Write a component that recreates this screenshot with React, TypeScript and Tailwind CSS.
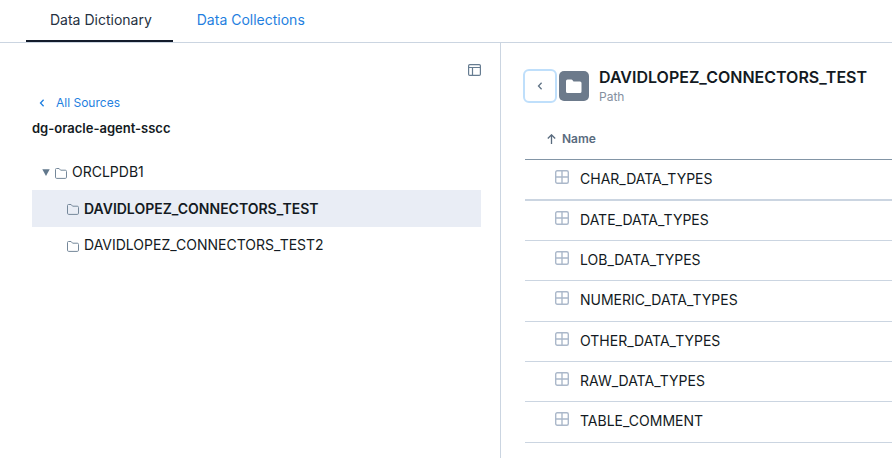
const tables = [
  "CHAR_DATA_TYPES",
  "DATE_DATA_TYPES",
  "LOB_DATA_TYPES",
  "NUMERIC_DATA_TYPES",
  "OTHER_DATA_TYPES",
  "RAW_DATA_TYPES",
  "TABLE_COMMENT",
];

function Chevron({ className }: { className: string }) {
  return (
    <svg className={className} width="6" height="8" viewBox="0 0 6 8" fill="none" stroke="currentColor" strokeWidth="1.3" aria-hidden="true">
      <path d="M4.6 0.8 1.5 4l3.1 3.2" />
    </svg>
  );
}

function FolderOutline() {
  return (
    <svg className="mt-[2px] shrink-0 text-[#75889a]" width="12" height="11" viewBox="0 0 12 11" fill="none" stroke="currentColor" aria-hidden="true">
      <path d="M.5 9.2V1.5q0-1 1-1h2.6l1.5 1.7h4.7q1.2 0 1.2 1.2v5.8q0 1.2-1.2 1.2H1.7Q.5 10.4 .5 9.2Z" />
    </svg>
  );
}

function TableIcon() {
  return (
    <svg className="block text-[#abb8ca]" width="14" height="14" viewBox="0 0 14 14" fill="none" stroke="currentColor" strokeWidth="1.4" aria-hidden="true">
      <rect x=".7" y=".7" width="12.6" height="12.6" rx="1.5" />
      <path d="M7 .7v12.6M.7 7h12.6" />
    </svg>
  );
}

export default function App() {
  return (
    <div className="flex min-h-screen flex-col bg-white font-['Inter','Liberation_Sans',sans-serif] text-sm text-[#131a22]">
      <nav className="flex h-[43px] border-b border-[#cbd5e1] pl-[26px]">
        <button className="h-[42px] border-b-2 border-[#131c2b] pr-[21px] pl-6 text-[#253041]">Data Dictionary</button>
        <button className="h-[42px] border-b-2 border-transparent px-6 text-[#1f7fe0]">Data Collections</button>
      </nav>
      <main className="flex flex-1">
        <aside className="w-[501px] shrink-0 border-r border-[#cbd5e1] pr-[19px] pl-8">
          <div className="flex justify-end pt-[21px]">
            <button aria-label="Toggle panel" className="text-[#667c91]">
              <svg width="13" height="12" viewBox="0 0 13 12" fill="none" stroke="currentColor" strokeWidth="1.2" aria-hidden="true">
                <rect x=".6" y=".6" width="11.8" height="10.8" rx="1.2" />
                <path d="M.6 3.5h11.8M4.5 3.5v7.9" />
              </svg>
            </button>
          </div>
          <a href="#sources" className="mt-[17px] ml-[7px] flex h-5 w-fit items-center text-xs text-[#1f7fe0]">
            <Chevron className="mr-[11px]" />
            All Sources
          </a>
          <h2 className="mt-[3px] text-[13px] leading-6 font-semibold">dg-oracle-agent-sscc</h2>
          <ul className="mt-[14px]">
            <li>
              <button className="flex h-9 w-full items-center pl-[10px] text-left">
                <svg className="mr-[5px] text-[#62788c]" width="8" height="7" viewBox="0 0 8 7" aria-hidden="true">
                  <path d="M.3.3h7.4L4 7Z" fill="currentColor" />
                </svg>
                <FolderOutline />
                <span className="ml-[5px]">ORCLPDB1</span>
              </button>
              <ul>
                <li>
                  <button className="flex h-[37px] w-full items-center bg-[#e9edf5] pl-[35px] text-left font-semibold">
                    <FolderOutline />
                    <span className="ml-[5px]">DAVIDLOPEZ_CONNECTORS_TEST</span>
                  </button>
                </li>
                <li>
                  <button className="flex h-9 w-full items-center pl-[35px] text-left">
                    <FolderOutline />
                    <span className="ml-[5px]">DAVIDLOPEZ_CONNECTORS_TEST2</span>
                  </button>
                </li>
              </ul>
            </li>
          </ul>
        </aside>
        <section className="min-w-0 flex-1 pl-[22px]">
          <header className="flex items-center pt-[22px]">
            <button aria-label="Back" className="flex size-[34px] shrink-0 items-center justify-center rounded-md border-2 border-[#bfdffb] text-[#607386]">
              <Chevron className="" />
            </button>
            <span className="ml-[2px] flex size-[30px] shrink-0 items-center justify-center rounded-[5px] bg-[#6c7a8b]">
              <svg width="16" height="15" viewBox="0 0 16 15" fill="#fff" aria-hidden="true">
                <path d="M0 2Q0 .5 1.5 .5h3.8q.8 0 1.3.7L7.5 2.5h6.5Q15.5 2.5 15.5 4v8.5q0 1.5-1.5 1.5H1.5Q0 14 0 12.5Z" />
              </svg>
            </span>
            <div className="ml-[10px] min-w-0 pt-[2px]">
              <h1 className="text-base leading-5 font-semibold">DAVIDLOPEZ_CONNECTORS_TEST</h1>
              <p className="text-xs leading-5 text-[#8490a0]">Path</p>
            </div>
          </header>
          <div className="pt-[13px] pl-[2px]">
            <table className="w-full border-separate border-spacing-0">
              <thead>
                <tr className="h-10">
                  <th className="border-b border-[#8295a6] p-0 pb-[2px] pl-[22px] text-left text-xs font-semibold text-[#596b7e]">
                    <button className="flex items-center">
                      <svg className="mr-[6px]" width="9" height="10" viewBox="0 0 9 10" fill="none" stroke="currentColor" strokeWidth="1.3" aria-hidden="true">
                        <path d="M4.5 10V1M.8 4.5l3.7-3.7 3.7 3.7" />
                      </svg>
                      Name
                    </button>
                  </th>
                </tr>
              </thead>
              <tbody>
                {tables.map((name) => (
                  <tr key={name} className="group h-10 nth-[3n+1]:h-[41px]">
                    <td className="border-b border-[#cbd5e1] p-0 pb-[2px] pl-[30px] group-first:border-b-2">
                      <div className="flex items-center">
                        <span className="mr-[11px] pb-1">
                          <TableIcon />
                        </span>
                        {name}
                      </div>
                    </td>
                  </tr>
                ))}
              </tbody>
            </table>
          </div>
        </section>
      </main>
    </div>
  );
}
